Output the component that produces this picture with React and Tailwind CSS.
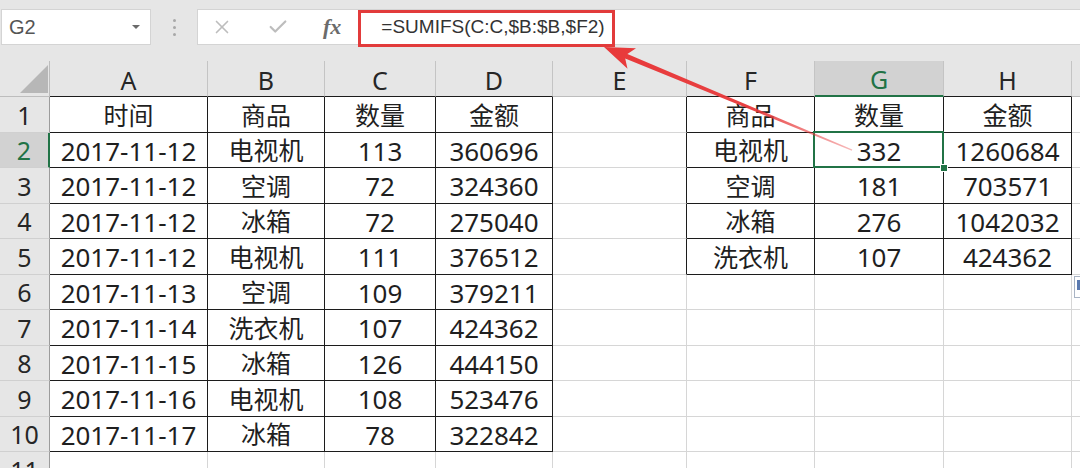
import { X, Check } from 'lucide-react'

const COLS = [158, 117, 111, 117, 134, 128, 129, 128, 120]
const LETTERS = ['A', 'B', 'C', 'D', 'E', 'F', 'G', 'H', '']

const LEFT = [
  ['时间', '商品', '数量', '金额'],
  ['2017-11-12', '电视机', '113', '360696'],
  ['2017-11-12', '空调', '72', '324360'],
  ['2017-11-12', '冰箱', '72', '275040'],
  ['2017-11-12', '电视机', '111', '376512'],
  ['2017-11-13', '空调', '109', '379211'],
  ['2017-11-14', '洗衣机', '107', '424362'],
  ['2017-11-15', '冰箱', '126', '444150'],
  ['2017-11-16', '电视机', '108', '523476'],
  ['2017-11-17', '冰箱', '78', '322842'],
]

const RIGHT = [
  ['商品', '数量', '金额'],
  ['电视机', '332', '1260684'],
  ['空调', '181', '703571'],
  ['冰箱', '276', '1042032'],
  ['洗衣机', '107', '424362'],
]

const inTable = (r, c) => (r >= 1 && r <= 10 && c >= 0 && c <= 3) || (r >= 1 && r <= 5 && c >= 5 && c <= 7)

const cellText = (r, c) => {
  if (r <= 10 && c <= 3) return LEFT[r - 1][c]
  if (r <= 5 && c >= 5 && c <= 7) return RIGHT[r - 1][c - 5]
  return ''
}

const isCjk = (s) => /[\u4e00-\u9fff]/.test(s)

function Cell({ r, c }) {
  const text = cellText(r, c)
  const right = inTable(r, c) || inTable(r, c + 1)
  const bottom = inTable(r, c) || inTable(r + 1, c)
  const selected = r === 2 && c === 6
  return (
    <div
      style={{ width: COLS[c] }}
      className={
        'relative shrink-0 h-full flex items-center justify-center border-r border-b pt-[2px] text-[#1f1f1f] leading-none ' +
        (right ? 'border-r-[#1c1c1c] ' : 'border-r-[#d6d6d6] ') +
        (bottom ? 'border-b-[#1c1c1c] ' : 'border-b-[#d6d6d6] ') +
        (isCjk(text) ? 'text-[25px]' : 'text-[26px]') +
        (selected ? ' z-10' : '')
      }
    >
      {text}
      {selected && (
        <>
          <div className="absolute left-[-2px] top-[-2px] right-[-1px] bottom-[-1px] border-2 border-[#217346]" />
          <div className="absolute right-[-5px] bottom-[-5px] w-[8px] h-[8px] bg-[#217346] border border-white" />
        </>
      )}
    </div>
  )
}

function RowHeader({ r }) {
  const active = r === 2
  return (
    <div
      className={
        'w-[50px] shrink-0 h-full flex items-center justify-center pt-[2px] text-[25px] leading-none border-b border-b-[#d0d0d0] ' +
        (active
          ? 'bg-[#d2d2d2] text-[#217346] border-r-2 border-r-[#217346]'
          : 'bg-[#e6e6e6] text-[#262626] border-r border-r-[#9c9c9c]')
      }
    >
      {r}
    </div>
  )
}

function FormulaBar() {
  return (
    <div className="relative h-[61px] bg-[#e6e6e6] pt-[9px] flex items-start">
      <div className="ml-[1px] w-[150px] h-[36px] bg-white border border-[#d4d4d4] flex items-center justify-between pl-[7px] pr-[10px]">
        <span className="text-[20px] text-[#555] font-['Liberation_Sans',sans-serif]">G2</span>
        <span className="w-0 h-0 border-l-[4px] border-r-[4px] border-t-[4px] border-l-transparent border-r-transparent border-t-[#6a6a6a]" />
      </div>
      <div className="w-[46px] h-[36px] flex flex-col items-center justify-center gap-[4px]">
        <span className="w-[3px] h-[3px] rounded-full bg-[#a8a8a8]" />
        <span className="w-[3px] h-[3px] rounded-full bg-[#a8a8a8]" />
        <span className="w-[3px] h-[3px] rounded-full bg-[#a8a8a8]" />
      </div>
      <div className="flex-1 h-[36px] bg-white border border-[#d4d4d4] border-r-0 flex items-center">
        <X className="ml-[13px] w-[22px] h-[22px] text-[#bdbdbd]" strokeWidth={1.8} />
        <Check className="ml-[34px] w-[22px] h-[22px] text-[#bdbdbd]" strokeWidth={2.4} />
        <span className="ml-[34px] text-[22px] italic font-bold text-[#6b6b6b] font-['Liberation_Serif',serif] leading-none">fx</span>
        <span className="ml-[40px] text-[19px] text-[#333] font-['Liberation_Sans',sans-serif]">=SUMIFS(C:C,$B:$B,$F2)</span>
      </div>
      <div className="absolute left-[358px] top-[10px] w-[257px] h-[37px] border-[3px] border-[#e23b3b]" />
    </div>
  )
}

function ColumnHeader() {
  return (
    <div className="flex h-[36px] bg-[#e6e6e6]">
      <div className="w-[50px] shrink-0 h-full border-r border-b border-[#bdbdbd] relative">
        <svg className="absolute left-0 top-0" width="50" height="36">
          <polygon points="48,4 48,32 20,32" fill="#b7b7b7" />
        </svg>
      </div>
      {LETTERS.map((l, c) => {
        const active = c === 6
        return (
          <div
            key={c}
            style={{ width: COLS[c] }}
            className={
              'shrink-0 h-full flex items-center justify-center pt-[3px] text-[25px] leading-none border-r border-r-[#c4c4c4] ' +
              (active
                ? 'bg-[#d2d2d2] text-[#217346] border-b-2 border-b-[#217346]'
                : 'text-[#262626] border-b ' + (inTable(1, c) ? 'border-b-[#1c1c1c]' : 'border-b-[#bdbdbd]'))
            }
          >
            {l}
          </div>
        )
      })}
    </div>
  )
}

function Arrow() {
  return (
    <svg className="absolute left-0 top-0 pointer-events-none z-20" width="1080" height="468">
      <defs>
        <linearGradient id="fade" gradientUnits="userSpaceOnUse" x1="604" y1="47" x2="852" y2="150">
          <stop offset="0" stopColor="#e8393a" stopOpacity="1" />
          <stop offset="0.6" stopColor="#e8393a" stopOpacity="0.95" />
          <stop offset="1" stopColor="#e8393a" stopOpacity="0.35" />
        </linearGradient>
      </defs>
      <polygon
        points="604,47 636,48.3 627.4,53.9 852.3,149.4 851.8,150.8 625.2,58.5 627.5,68.7"
        fill="url(#fade)"
      />
    </svg>
  )
}

export default function App() {
  const rows = [1, 2, 3, 4, 5, 6, 7, 8, 9, 10, 11]
  return (
    <div className="relative w-[1080px] h-[468px] overflow-hidden bg-white font-['Noto_Sans','Noto_Sans_CJK_SC',sans-serif]">
      <FormulaBar />
      <ColumnHeader />
      {rows.map((r) => (
        <div key={r} className="flex h-[35.5px]">
          <RowHeader r={r} />
          {LETTERS.map((l, c) => (
            <Cell key={c} r={r} c={c} />
          ))}
        </div>
      ))}
      <div className="absolute left-[1074px] top-[276px] w-[16px] h-[22px] bg-white border border-[#a9b4c4] z-10">
        <div className="ml-[2px] mt-[3px] w-[4px] h-[10px] bg-[#5a7ab0]" />
      </div>
      <Arrow />
    </div>
  )
}
